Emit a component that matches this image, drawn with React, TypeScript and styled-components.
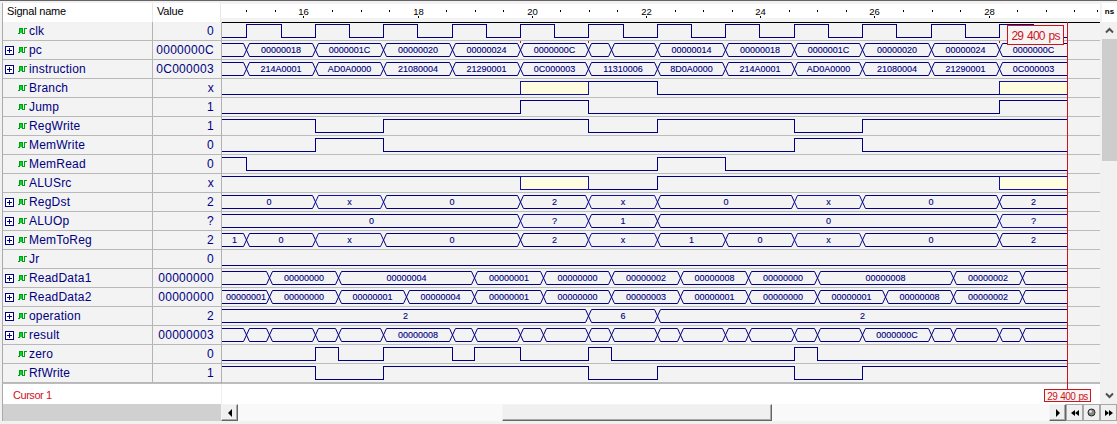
import React from "react";
import styled, { createGlobalStyle } from "styled-components";

const NAVY = "#000080";
const BLUE = "#1010a8";
const RED = "#cc141c";

const Global = createGlobalStyle`
  body { margin: 0; background: #f3f3f3; overflow: hidden; }
  * { box-sizing: border-box; }
`;

/* ---------- time scale (ns to px inside the wave area) ---------- */
const LEFT = 222;
const START = 14.5;
const END = 29.4;
const pos = (t: number) =>
  t <= START ? 0 : Math.round(246.33 + (t - 15) * 57.018) - LEFT;

type Seg = [end: number, value: string];
interface Signal {
  name: string;
  value: string;
  kind: "bit" | "bus";
  segs: Seg[];
}

const write: Seg[] = [[16.2, "1"], [17.4, "0"], [21, "1"], [22.2, "0"], [24.6, "1"], [25.8, "0"], [END, "1"]];
const clock: Seg[] = [[15, "0"], ...Array.from({ length: 24 }, (_, i): Seg => [
  15 + 0.6 * (i + 1), i % 2 ? "0" : "1",
])];

const signals: Signal[] = [
  { name: "clk", value: "0", kind: "bit", segs: clock },
  { name: "pc", value: "0000000C", kind: "bus", segs: [[15, ""], [16.2, "00000018"], [17.4, "0000001C"], [18.6, "00000020"], [19.8, "00000024"], [21, "0000000C"], [21.4, ""], [22.2, ""], [23.4, "00000014"], [24.6, "00000018"], [25.8, "0000001C"], [27, "00000020"], [28.2, "00000024"], [END, "0000000C"]] },
  { name: "instruction", value: "0C000003", kind: "bus", segs: [[15, ""], [16.2, "214A0001"], [17.4, "AD0A0000"], [18.6, "21080004"], [19.8, "21290001"], [21, "0C000003"], [22.2, "11310006"], [23.4, "8D0A0000"], [24.6, "214A0001"], [25.8, "AD0A0000"], [27, "21080004"], [28.2, "21290001"], [END, "0C000003"]] },
  { name: "Branch", value: "x", kind: "bit", segs: [[19.8, "0"], [21, "x"], [22.2, "1"], [28.2, "0"], [END, "x"]] },
  { name: "Jump", value: "1", kind: "bit", segs: [[19.8, "0"], [21, "1"], [28.2, "0"], [END, "1"]] },
  { name: "RegWrite", value: "1", kind: "bit", segs: write },
  { name: "MemWrite", value: "0", kind: "bit", segs: [[16.2, "0"], [17.4, "1"], [24.6, "0"], [25.8, "1"], [END, "0"]] },
  { name: "MemRead", value: "0", kind: "bit", segs: [[15, "1"], [22.2, "0"], [23.4, "1"], [END, "0"]] },
  { name: "ALUSrc", value: "x", kind: "bit", segs: [[19.8, "1"], [21, "x"], [22.2, "0"], [28.2, "1"], [END, "x"]] },
  { name: "RegDst", value: "2", kind: "bus", segs: [[16.2, "0"], [17.4, "x"], [19.8, "0"], [21, "2"], [22.2, "x"], [24.6, "0"], [25.8, "x"], [28.2, "0"], [END, "2"]] },
  { name: "ALUOp", value: "?", kind: "bus", segs: [[19.8, "0"], [21, "?"], [22.2, "1"], [28.2, "0"], [END, "?"]] },
  { name: "MemToReg", value: "2", kind: "bus", segs: [[15, "1"], [16.2, "0"], [17.4, "x"], [19.8, "0"], [21, "2"], [22.2, "x"], [23.4, "1"], [24.6, "0"], [25.8, "x"], [28.2, "0"], [END, "2"]] },
  { name: "Jr", value: "0", kind: "bit", segs: [[END, "0"]] },
  { name: "ReadData1", value: "00000000", kind: "bus", segs: [[15.4, ""], [16.6, "00000000"], [19, "00000004"], [20.2, "00000001"], [21.4, "00000000"], [22.6, "00000002"], [23.8, "00000008"], [25, "00000000"], [27.4, "00000008"], [28.6, "00000002"], [END, ""]] },
  { name: "ReadData2", value: "00000000", kind: "bus", segs: [[15.4, "00000001"], [16.6, "00000000"], [17.8, "00000001"], [19, "00000004"], [20.2, "00000001"], [21.4, "00000000"], [22.6, "00000003"], [23.8, "00000001"], [25, "00000000"], [26.2, "00000001"], [27.4, "00000008"], [28.6, "00000002"], [END, ""]] },
  { name: "operation", value: "2", kind: "bus", segs: [[21, "2"], [22.2, "6"], [END, "2"]] },
  { name: "result", value: "00000003", kind: "bus", segs: [[15, ""], [15.4, ""], [16.2, ""], [16.6, ""], [17.4, ""], [18.6, "00000008"], [19, ""], [19.8, ""], [20.2, ""], [21, ""], [21.4, ""], [22.2, ""], [22.6, ""], [23.4, ""], [23.8, ""], [24.6, ""], [25, ""], [25.8, ""], [27, "0000000C"], [27.4, ""], [28.2, ""], [28.6, ""], [END, ""]] },
  { name: "zero", value: "0", kind: "bit", segs: [[16.2, "0"], [16.6, "1"], [17.4, "0"], [18.6, "1"], [19, "0"], [19.8, "1"], [21, "0"], [21.4, "1"], [24.6, "0"], [25, "1"], [END, "0"]] },
  { name: "RfWrite", value: "1", kind: "bit", segs: write },
];

/* jump instants flagged with a red tick above the pc row */
const jumps = [19.8, 21, 28.2];

/* ---------- layout ---------- */
const Window = styled.div`
  width: 1117px;
  height: 424px;
  display: grid;
  grid-template-columns: 219px 879px 17px;
  grid-template-rows: 19px 362px 20px 17px;
  padding: 2px 0 0 2px;
  border-top: 1px solid #666266;
  background: #f1f1f1;
  font-family: "Liberation Sans", Arial, sans-serif;
  overflow: hidden;
`;

const HeadCells = styled.div`
  display: flex;
  background: #fff;
  border-left: 1px solid #aaa;
  font-size: 11px;
  letter-spacing: -0.2px;
  line-height: 17px;
  color: #000;
`;

const HeadCell = styled.div<{ $w: number; $pad: number }>`
  width: ${(p) => p.$w}px;
  padding-left: ${(p) => p.$pad}px;
  border-right: 1px solid #e8e8e8;
`;

const Ruler = styled.div`
  background: #f3f3f3;
`;

const Units = styled.div`
  margin-left: 2px;
  background: #fff;
  font-size: 8px;
  font-weight: bold;
  line-height: 17px;
  text-align: center;
`;

const Names = styled.div`
  border-left: 1px solid #aaa;
  border-bottom: 1px solid #bcbcbc;
  overflow: hidden;
`;

const SignalRow = styled.div`
  display: flex;
  height: 19px;
  border-bottom: 1px solid #b8b8b8;
  background: #f3f3f3;
  color: ${NAVY};
`;

const NameCell = styled.div`
  width: 150px;
  display: flex;
  align-items: center;
  padding-left: 2px;
  border-right: 1px solid #b4b4b4;
  font-size: 12px;
  letter-spacing: 0.2px;
`;

const Slot = styled.span`
  width: 13px;
  height: 18px;
  display: flex;
  align-items: center;
`;

const Label = styled.span`
  margin-left: 2px;
  line-height: 18px;
`;

const ValueCell = styled.div`
  flex: 1;
  padding-right: 7px;
  text-align: right;
  font-size: 12px;
  line-height: 18px;
  letter-spacing: 0.3px;
`;

const Waves = styled.div`
  position: relative;
  border-left: 1px solid #b0b0b0;
  border-bottom: 1px solid #bcbcbc;
  background: #f3f3f3;
  box-shadow: inset 0 1px #000;
`;

const WaveRow = styled.svg`
  display: block;
  width: 878px;
  height: 19px;
  border-bottom: 1px solid #bcbcbc;
  font-family: "Liberation Sans", Arial, sans-serif;
  font-size: 9px;
`;

const CursorLine = styled.div`
  position: absolute;
  left: 845px;
  top: 0;
  width: 1px;
  height: 368px;
  background: ${RED};
  z-index: 1;
`;

const CursorFlag = styled.div<{ $small?: boolean }>`
  position: absolute;
  z-index: 2;
  left: ${(p) => (p.$small ? 822 : 785)}px;
  top: ${(p) => (p.$small ? 367 : 3)}px;
  width: ${(p) => (p.$small ? 47 : 57)}px;
  height: ${(p) => (p.$small ? 13 : 20)}px;
  border: 1px solid ${RED};
  background: #f8f4f4;
  color: ${RED};
  font-size: ${(p) => (p.$small ? 10 : 12)}px;
  letter-spacing: ${(p) => (p.$small ? -0.6 : -0.85)}px;
  word-spacing: ${(p) => (p.$small ? 1 : 1.5)}px;
  line-height: ${(p) => (p.$small ? 13 : 20)}px;
  text-align: center;
  white-space: nowrap;
`;

const VScroll = styled.div`
  grid-row: 2 / 4;
  grid-column: 3;
  margin-left: 2px;
  display: flex;
  flex-direction: column;
  background: #f1f1f1;
`;

const ArrowBox = styled.div`
  height: 17px;
  display: flex;
  align-items: center;
  justify-content: center;
`;

const VThumb = styled.div`
  height: 122px;
  margin-bottom: auto;
  background: #cdcdcd;
`;

const CursorName = styled.div`
  background: #fff;
  border-left: 1px solid #aaa;
  padding-left: 10px;
  color: ${RED};
  font-size: 11px;
  letter-spacing: -0.45px;
  line-height: 22px;
`;

const CursorTrack = styled.div`
  background: #fff;
  border-left: 1px solid #eee;
`;

const NameScroll = styled.div`
  background: #d0d0d0;
  border-left: 1px solid #aaa;
`;

const HScroll = styled.div`
  grid-column: 2 / 4;
  display: flex;
  background: #f9f9f9;
`;

const Button = styled.div<{ $w?: number; $flat?: boolean }>`
  width: ${(p) => p.$w ?? 17}px;
  height: 17px;
  flex: none;
  display: flex;
  align-items: center;
  justify-content: center;
  background: #f0f0f0;
  border: 1px solid ${(p) => (p.$flat ? "#a8a8a8" : "#f4f4f4")};
  border-right-color: ${(p) => (p.$flat ? "#a8a8a8" : "#666")};
  border-bottom-color: ${(p) => (p.$flat ? "#a8a8a8" : "#666")};
  box-shadow: ${(p) => (p.$flat ? "none" : "inset -1px -1px #aaa")};
`;

const Gap = styled.div<{ $w: number }>`
  width: ${(p) => p.$w}px;
  flex: none;
`;

/* ---------- drawings ---------- */
const Expand = () => (
  <svg width="9" height="9" shapeRendering="crispEdges">
    <rect x="0.5" y="0.5" width="8" height="8" fill="#fff" stroke={NAVY} />
    <path d="M2 4.5H7M4.5 2V7" stroke={NAVY} />
  </svg>
);

const WaveIcon = () => (
  <svg width="9" height="6" shapeRendering="crispEdges">
    <path d="M2 1H4V5H2ZM6 1H7V5H6Z" fill="#00dc28" />
    <path d="M0 5.5H2M1.5 5V0.5H4.5V5.5H6.5V0.5H9" fill="none" stroke="#009c14" />
  </svg>
);

const HI = 2.5;
const LO = 15.5;

const spans = (segs: Seg[]) =>
  segs.map(([end, value], i) => ({
    a: i ? pos(segs[i - 1][0]) : 0,
    b: pos(end),
    value,
    first: i === 0,
    last: i === segs.length - 1,
  }));

const Bit = ({ segs }: { segs: Seg[] }) => {
  let d = "";
  const parts = spans(segs);
  parts.forEach((s) => {
    const y = s.value === "1" ? HI : LO;
    d += s.first ? `M0 ${y}` : `L${s.a + 0.5} ${y}`;
    d += `L${s.b + 0.5} ${y}`;
  });
  return (
    <g shapeRendering="crispEdges">
      <path d={d} fill="none" stroke={NAVY} />
      {parts.filter((s) => s.value === "x").map((s) => (
        <rect key={s.a} x={s.a + 0.5} y={HI} width={s.b - s.a} height={LO - HI} fill="#fffde0" stroke={BLUE} />
      ))}
    </g>
  );
};

const Bus = ({ segs }: { segs: Seg[] }) => (
  <g>
    {spans(segs).map((s) => {
      const color = s.value === "x" || s.value === "?" ? BLUE : NAVY;
      const a = s.a + 0.5;
      const b = s.b + 0.5;
      const top = s.first ? `M0 ${HI}` : `M${a} 9L${a + 3} ${HI}`;
      const bottom = s.first ? `M0 ${LO}` : `M${a} 9L${a + 3} ${LO}`;
      const endTop = s.last ? `H${b}` : `H${b - 3}L${b} 9`;
      const endBottom = s.last ? `H${b}` : `H${b - 3}L${b} 9`;
      return (
        <g key={s.a}>
          <path d={top + endTop + bottom + endBottom} fill="none" stroke={color} />
          {s.value && (
            <text x={(a + b) / 2} y="12" textAnchor="middle" fill={NAVY} stroke={NAVY} strokeWidth="0.12">{s.value}</text>
          )}
        </g>
      );
    })}
  </g>
);

const JumpTicks = () => (
  <g shapeRendering="crispEdges">
    {jumps.map((t) => (
      <path key={t} d={`M${pos(t) + 0.5} 0V2`} stroke={RED} />
    ))}
  </g>
);

const RulerMarks = () => (
  <svg width="879" height="18" fontFamily='"Liberation Sans", Arial, sans-serif' fontSize="9.5">
    <rect y="1" width="879" height="14" fill="#fff" />
    {Array.from({ length: 30 }, (_, i) => {
      const t = 15 + i * 0.5;
      const x = Math.round(246.33 + (t - 15) * 57.1) - 221 + 0.5;
      const major = i % 4 === 2;
      return major ? (
        <g key={i}>
          <text x={x} y="11.5" textAnchor="middle">{t}</text>
          <path d={`M${x} 13V15`} stroke="#000" />
        </g>
      ) : (
        <path key={i} d={`M${x} 7V9`} stroke="#000" />
      );
    })}
    <path d="M876.5 7V9" stroke="#000" />
  </svg>
);

const Chevron = ({ up }: { up?: boolean }) => (
  <svg width="9" height="7">
    <path d={up ? "M1 5.5L4.5 2L8 5.5" : "M1 1.5L4.5 5L8 1.5"} fill="none" stroke="#505050" strokeWidth="2" />
  </svg>
);

const Triangles = ({ d }: { d: string }) => (
  <svg width="10" height="8"><path d={d} fill="#000" /></svg>
);

export default function App() {
  return (
    <>
      <Global />
      <Window>
        <HeadCells>
          <HeadCell $w={150} $pad={4}>Signal name</HeadCell>
          <HeadCell $w={68} $pad={4}>Value</HeadCell>
        </HeadCells>
        <Ruler><RulerMarks /></Ruler>
        <Units>ns</Units>

        <Names>
          {signals.map((s) => (
            <SignalRow key={s.name}>
              <NameCell>
                <Slot>{s.kind === "bus" && <Expand />}</Slot>
                <WaveIcon />
                <Label>{s.name}</Label>
              </NameCell>
              <ValueCell>{s.value}</ValueCell>
            </SignalRow>
          ))}
        </Names>
        <Waves>
          {signals.map((s) => (
            <WaveRow key={s.name}>
              {s.kind === "bit" ? <Bit segs={s.segs} /> : <Bus segs={s.segs} />}
              {s.name === "pc" && <JumpTicks />}
            </WaveRow>
          ))}
          <CursorLine />
          <CursorFlag>29 400 ps</CursorFlag>
          <CursorFlag $small>29 400 ps</CursorFlag>
        </Waves>
        <VScroll>
          <ArrowBox><Chevron up /></ArrowBox>
          <VThumb />
          <ArrowBox><Chevron /></ArrowBox>
        </VScroll>

        <CursorName>Cursor 1</CursorName>
        <CursorTrack />

        <NameScroll />
        <HScroll>
          <Button><Triangles d="M7 0V8L3 4Z" /></Button>
          <Gap $w={264} />
          <Button $w={270} />
          <Gap $w={277} />
          <Button><Triangles d="M3 0V8L7 4Z" /></Button>
          <Button $flat><Triangles d="M5 1V7L1 4ZM9 1V7L5 4Z" /></Button>
          <Button $flat>
            <svg width="9" height="9">
              <circle cx="4.5" cy="4.5" r="3.5" fill="#888" stroke="#222" />
              <circle cx="3.5" cy="3.5" r="1.3" fill="#eee" />
            </svg>
          </Button>
          <Button $flat><Triangles d="M1 1V7L5 4ZM5 1V7L9 4Z" /></Button>
        </HScroll>
      </Window>
    </>
  );
}
